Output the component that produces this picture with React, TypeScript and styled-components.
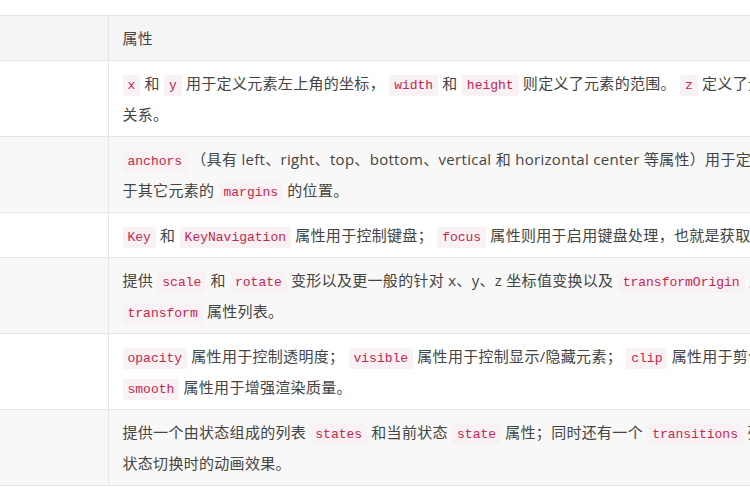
import styled, { createGlobalStyle } from "styled-components";

const GlobalStyle = createGlobalStyle`
  html, body {
    margin: 0;
    padding: 0;
    background: #ffffff;
  }
  body {
    font-family: "Open Sans", "Noto Sans CJK SC", sans-serif;
    font-size: 15px;
    color: #444;
  }
`;

type Seg = string | { code: string };

const rows: Seg[][][] = [
  [
    [
      { code: "x" },
      " 和 ",
      { code: "y" },
      " 用于定义元素左上角的坐标， ",
      { code: "width" },
      " 和 ",
      { code: "height" },
      " 则定义了元素的范围。 ",
      { code: "z" },
      " 定义了元素上下的层叠",
    ],
    ["关系。"],
  ],
  [
    [
      { code: "anchors" },
      " （具有 left、right、top、bottom、vertical 和 horizontal center 等属性）用于定位元素相对",
    ],
    ["于其它元素的 ", { code: "margins" }, " 的位置。"],
  ],
  [
    [
      { code: "Key" },
      " 和 ",
      { code: "KeyNavigation" },
      " 属性用于控制键盘； ",
      { code: "focus" },
      " 属性则用于启用键盘处理，也就是获取焦点。",
    ],
  ],
  [
    [
      "提供 ",
      { code: "scale" },
      " 和 ",
      { code: "rotate" },
      " 变形以及更一般的针对 x、y、z 坐标值变换以及 ",
      { code: "transformOrigin" },
      " 点的",
    ],
    [{ code: "transform" }, " 属性列表。"],
  ],
  [
    [
      { code: "opacity" },
      " 属性用于控制透明度； ",
      { code: "visible" },
      " 属性用于控制显示/隐藏元素； ",
      { code: "clip" },
      " 属性用于剪切元素；",
    ],
    [{ code: "smooth" }, " 属性用于增强渲染质量。"],
  ],
  [
    [
      "提供一个由状态组成的列表 ",
      { code: "states" },
      " 和当前状态 ",
      { code: "state" },
      " 属性；同时还有一个 ",
      { code: "transitions" },
      " 列表，用于设置",
    ],
    ["状态切换时的动画效果。"],
  ],
];

const Page = styled.div`
  width: 750px;
  height: 500px;
  overflow: hidden;
  padding-top: 15px;
  box-sizing: border-box;
`;

const Table = styled.table`
  border-collapse: collapse;
  width: 1200px;
  table-layout: fixed;
`;

const Row = styled.tr<{ $shade?: boolean }>`
  background: ${(p) => (p.$shade ? "#f8f8f8" : "#ffffff")};
  border-top: 1px solid #e6e6e6;
  border-bottom: 1px solid #e6e6e6;
`;

const HeadRow = styled.tr`
  background: #f5f5f5;
  border-top: 1px solid #e4e4e4;
  border-bottom: 1px solid #e4e4e4;
`;

const NameCell = styled.td`
  border-right: 1px solid #e6e6e6;
  padding: 0;
`;

const HeadCell = styled.th`
  text-align: left;
  font-weight: normal;
  color: #444;
  padding: 7px 14px;
  line-height: 30px;
  letter-spacing: 0.3px;
`;

const DescCell = styled.td`
  padding: 7px 14px 6px;
  line-height: 31px;
  white-space: nowrap;
  vertical-align: top;
`;

const Line = styled.div`
  display: block;
  height: 31px;
`;

const Text = styled.span`
  letter-spacing: 0.3px;
`;

const Code = styled.code`
  font-family: "Liberation Mono", "DejaVu Sans Mono", monospace;
  font-size: 13px;
  line-height: 1;
  color: #c7254e;
  background: #f9f2f4;
  padding: 3px 5px;
  border-radius: 2px;
`;

export default function App() {
  return (
    <>
      <GlobalStyle />
      <Page>
        <Table>
          <colgroup>
            <col style={{ width: 108 }} />
            <col />
          </colgroup>
          <thead>
            <HeadRow>
              <NameCell as="th" />
              <HeadCell>属性</HeadCell>
            </HeadRow>
          </thead>
          <tbody>
            {rows.map((lines, i) => (
              <Row key={i} $shade={i % 2 === 1}>
                <NameCell />
                <DescCell>
                  {lines.map((segs, j) => (
                    <Line key={j}>
                      {segs.map((s, k) =>
                        typeof s === "string" ? (
                          <Text key={k}>{s}</Text>
                        ) : (
                          <Code key={k}>{s.code}</Code>
                        )
                      )}
                    </Line>
                  ))}
                </DescCell>
              </Row>
            ))}
          </tbody>
        </Table>
      </Page>
    </>
  );
}
